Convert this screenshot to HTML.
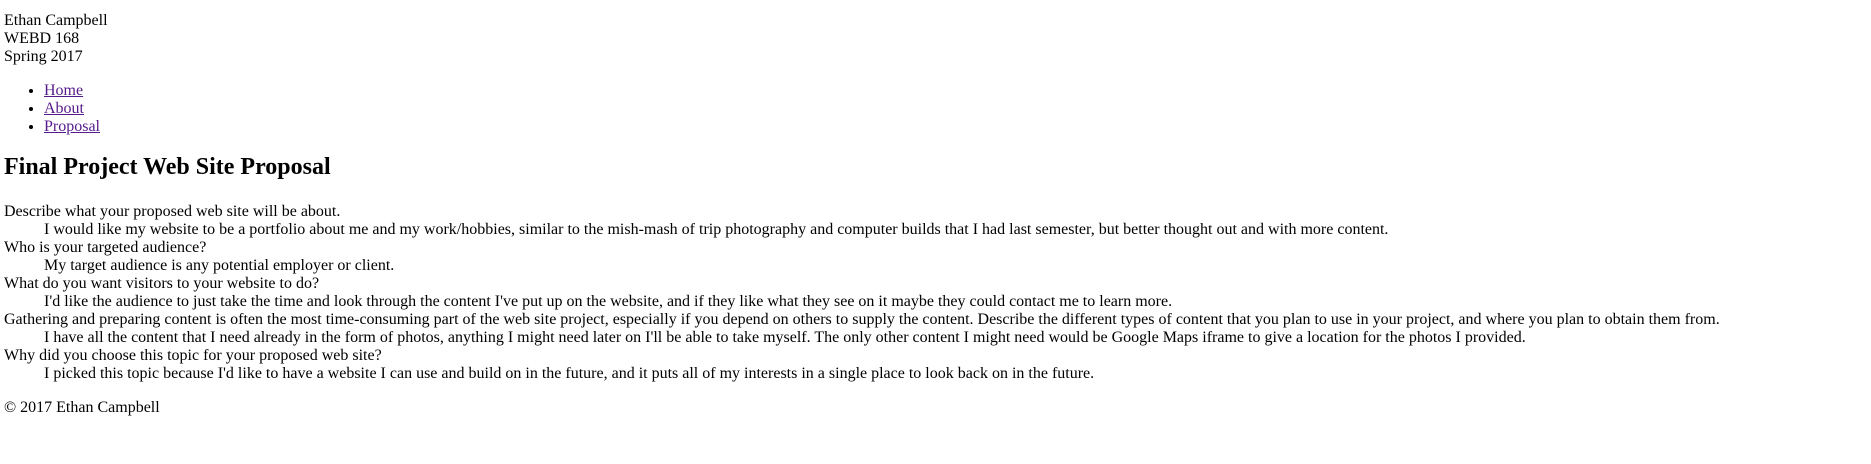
<!DOCTYPE html>
<html><head><meta charset="utf-8"><style>
html,body{background:#fff;}
body{margin:0;padding:12px 4px 0 4px;font-family:"Liberation Serif",serif;font-size:16px;line-height:18px;color:#000;white-space:nowrap;}
ul{margin:16px 0;padding-left:40px;}
a{color:#551a8b;text-decoration:underline;}
h2{font-size:24px;line-height:28px;margin:17px 0 22px;font-weight:bold;}
dl{margin:0 0 16px;}
dd{margin-left:40px;}
p{margin:16px 0;}
</style></head><body>
<div>Ethan Campbell<br>WEBD 168<br>Spring 2017</div>
<ul><li><a>Home</a></li><li><a>About</a></li><li><a>Proposal</a></li></ul>
<h2>Final Project Web Site Proposal</h2>
<dl>
<dt>Describe what your proposed web site will be about.</dt>
<dd>I would like my website to be a portfolio about me and my work/hobbies, similar to the mish-mash of trip photography and computer builds that I had last semester, but better thought out and with more content.</dd>
<dt>Who is your targeted audience?</dt>
<dd>My target audience is any potential employer or client.</dd>
<dt>What do you want visitors to your website to do?</dt>
<dd>I'd like the audience to just take the time and look through the content I've put up on the website, and if they like what they see on it maybe they could contact me to learn more.</dd>
<dt>Gathering and preparing content is often the most time-consuming part of the web site project, especially if you depend on others to supply the content. Describe the different types of content that you plan to use in your project, and where you plan to obtain them from.</dt>
<dd>I have all the content that I need already in the form of photos, anything I might need later on I'll be able to take myself. The only other content I might need would be Google Maps iframe to give a location for the photos I provided.</dd>
<dt>Why did you choose this topic for your proposed web site?</dt>
<dd>I picked this topic because I'd like to have a website I can use and build on in the future, and it puts all of my interests in a single place to look back on in the future.</dd>
</dl>
<p>© 2017 Ethan Campbell</p>
</body></html>
